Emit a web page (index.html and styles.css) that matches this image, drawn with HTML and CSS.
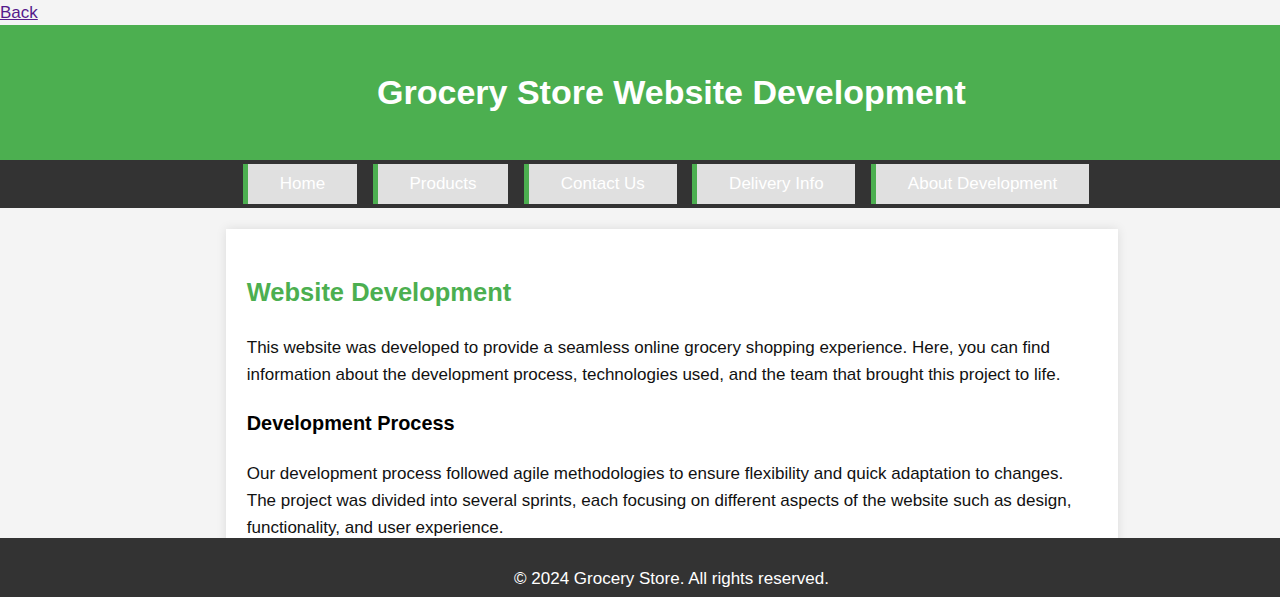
FILE: index.html
```html
<!DOCTYPE html>
<html lang="en">
<head>
<meta charset="UTF-8">
<title>About Development - Grocery Store</title>
<link rel="stylesheet" href="styles.css">
</head>
<body>
<div class="back-bar"><a class="back-link" href="#">Back</a></div>
<header class="site-header">
  <h1 class="site-title">Grocery Store Website Development</h1>
</header>
<nav class="site-nav">
  <a class="nav-btn" href="#">Home</a>
  <a class="nav-btn" href="#">Products</a>
  <a class="nav-btn" href="#">Contact Us</a>
  <a class="nav-btn" href="#">Delivery Info</a>
  <a class="nav-btn" href="#">About Development</a>
</nav>
<main class="main">
  <section class="card">
    <h2 class="card-title">Website Development</h2>
    <p class="card-text">This website was developed to provide a seamless online grocery shopping experience. Here, you can find information about the development process, technologies used, and the team that brought this project to life.</p>
    <h3 class="card-subtitle">Development Process</h3>
    <p class="card-text">Our development process followed agile methodologies to ensure flexibility and quick adaptation to changes. The project was divided into several sprints, each focusing on different aspects of the website such as design, functionality, and user experience.</p>
  </section>
</main>
<footer class="site-footer">
  <p class="footer-text">&copy; 2024 Grocery Store. All rights reserved.</p>
</footer>
</body>
</html>
```

FILE: styles.css
```css
html, body {
  margin: 0;
  padding: 0;
}

html {
  overflow: hidden;
}

body {
  font-family: "Liberation Sans", Arial, sans-serif;
  font-size: 17px;
  line-height: 1.6;
  background: #f4f4f4;
  color: #333;
}

.back-bar {
  height: 25px;
  line-height: 25px;
}

.back-link {
  color: #551a8b;
}

.site-header {
  background: #4caf50;
  color: #fff;
  padding: 20px 0 20px 63px;
  text-align: center;
}

.site-title {
  margin: 20px 0;
  font-size: 34px;
  line-height: 55px;
  font-weight: bold;
}

.site-nav {
  background: #333;
  display: flex;
  justify-content: center;
  gap: 15.5px;
  padding: 4px 11px 4px 63px;
}

.nav-btn {
  display: block;
  height: 40px;
  line-height: 40px;
  padding: 0 31.875px;
  background: #e0e0e0;
  border-left: 5px solid #4caf50;
  color: #fff;
  text-decoration: none;
  font-size: 17px;
}

.main {
  padding: 21.25px 0 21.25px 63px;
}

.card {
  box-sizing: border-box;
  width: 892px;
  margin: 0 auto;
  padding: 21.25px;
  background: #fff;
  box-shadow: 0 0 10px rgba(0, 0, 0, 0.1);
}

.card-title {
  color: #4caf50;
  font-size: 25.5px;
  margin: 21.2px 0;
}

.card-subtitle {
  color: #000;
  font-size: 19.9px;
  margin: 19.9px 0;
}

.card-text {
  margin: 17px 0;
  color: #111;
}

.site-footer {
  position: fixed;
  left: 0;
  right: 0;
  bottom: 0;
  height: 59px;
  box-sizing: border-box;
  padding: 27px 0 0 63px;
  background: #333;
  color: #fff;
  text-align: center;
}

.footer-text {
  margin: 0;
  line-height: 27px;
}
```
